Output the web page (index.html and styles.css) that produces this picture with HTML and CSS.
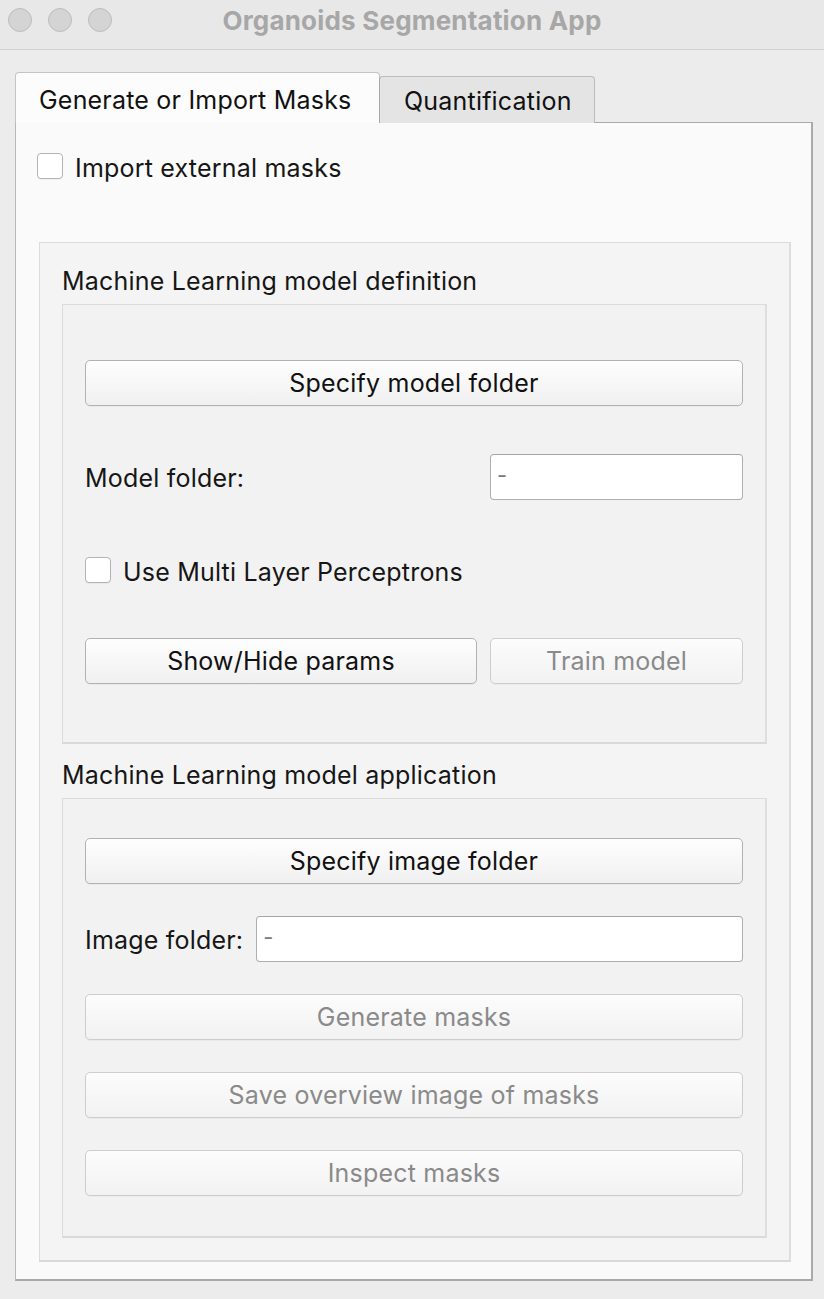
FILE: index.html
```html
<!DOCTYPE html>
<html>
<head>
<meta charset="utf-8">
<title>Organoids Segmentation App</title>
<link rel="stylesheet" href="styles.css">
</head>
<body>
<div class="titlebar">
  <div class="lights">
    <span class="light"></span><span class="light"></span><span class="light"></span>
  </div>
  <div class="title">Organoids Segmentation App</div>
  <div></div>
</div>
<div class="window">
  <div class="tabs">
    <div class="tab active">Generate or Import Masks</div>
    <div class="tab">Quantification</div>
  </div>
  <div class="pane">
    <div class="check top-check"><span class="box"></span><span class="check-text">Import external masks</span></div>
    <div class="group outer">
      <div class="group-title">Machine Learning model definition</div>
      <div class="group inner def">
        <div class="btn">Specify model folder</div>
        <div class="form-row model-row">
          <span class="label">Model folder:</span>
          <div class="input">-</div>
        </div>
        <div class="check mlp-check"><span class="box"></span><span class="check-text">Use Multi Layer Perceptrons</span></div>
        <div class="btn-row">
          <div class="btn">Show/Hide params</div>
          <div class="btn disabled">Train model</div>
        </div>
      </div>
      <div class="group-title second">Machine Learning model application</div>
      <div class="group inner app">
        <div class="btn">Specify image folder</div>
        <div class="form-row image-row">
          <span class="label">Image folder:</span>
          <div class="input grow">-</div>
        </div>
        <div class="btn disabled">Generate masks</div>
        <div class="btn disabled">Save overview image of masks</div>
        <div class="btn disabled">Inspect masks</div>
      </div>
    </div>
  </div>
</div>
</body>
</html>
```

FILE: styles.css
```css
* { box-sizing: border-box; }

html, body {
  margin: 0;
  padding: 0;
}

body {
  width: 824px;
  height: 1299px;
  overflow: hidden;
  background: #ececec;
  font-family: "Inter", "Liberation Sans", sans-serif;
  font-size: 25px;
  letter-spacing: 0.2px;
  color: #161616;
}

.titlebar {
  height: 50px;
  background: #e8e8e8;
  border-bottom: 1px solid #d2d2d2;
  display: grid;
  grid-template-columns: 1fr auto 1fr;
  align-items: center;
}

.lights {
  display: flex;
  gap: 16px;
  padding-left: 8px;
  align-self: start;
  padding-top: 8px;
}

.light {
  width: 24px;
  height: 24px;
  border-radius: 50%;
  background: #d4d4d4;
  border: 1px solid #bdbdbd;
}

.title {
  font-weight: 700;
  color: #a7a7a7;
  font-size: 26px;
  letter-spacing: 0.2px;
  margin-top: -8px;
}

.window {
  padding: 22px 11px 0 15px;
}

.tabs {
  display: flex;
  align-items: flex-end;
  position: relative;
  z-index: 1;
  margin-bottom: -1px;
}

.tab {
  height: 47px;
  padding: 2px 24px 0 24px;
  display: flex;
  align-items: center;
  background: #e4e4e4;
  border: 1px solid #bcbcbc;
  border-bottom: none;
  border-radius: 4px 4px 0 0;
  color: #111;
  width: 216px;
  margin-left: -1px;
}

.tab.active {
  height: 51px;
  width: 365px;
  margin-left: 0;
  background: #fcfcfc;
  border-color: #c4c4c4;
  padding-top: 8px;
  padding-bottom: 4px;
  padding-left: 23px;
}

.tab.active + .tab {
  border-left-color: #a8a8a8;
}

.pane {
  height: 1159px;
  background: #fafafa;
  border: 1px solid #b8b8b8;
  border-top-color: #aaaaaa;
  border-right: 2px solid #a9a9a9;
  border-bottom: 2px solid #a9a9a9;
  padding: 30px 20px 17px 23px;
}

.check {
  display: flex;
  align-items: center;
  gap: 12px;
}

.check-text {
  padding-top: 3px;
}

.box {
  width: 26px;
  height: 26px;
  background: #fff;
  border: 1px solid #b4b4b4;
  border-radius: 4px;
  box-shadow: 0 1px 0 rgba(0,0,0,0.04);
  flex: none;
}

.top-check {
  margin-left: -2px;
  height: 26px;
  margin-bottom: 63px;
}

.group {
  border: 1px solid #dcdcdc;
  border-bottom: 2px solid #d9d9d9;
  border-right: 2px solid #dedede;
}

.outer {
  height: 1020px;
  background: #f4f4f4;
  padding: 23px 22px 0 22px;
}

.group-title {
  height: 30px;
  line-height: 30px;
  margin-bottom: 8px;
  padding-left: 0;
}

.group-title.second {
  margin-top: 16px;
}

.inner {
  background: #f2f2f2;
  display: flex;
  flex-direction: column;
}

.def {
  height: 440px;
  padding: 55px 22px 0 22px;
}

.app {
  height: 440px;
  padding: 39px 22px 0 22px;
  gap: 32px;
}

.btn {
  height: 46px;
  display: flex;
  align-items: center;
  justify-content: center;
  border: 1px solid #b2b2b2;
  border-radius: 5px;
  background: linear-gradient(#fefefe, #f0f0f0);
  color: #111;
  box-shadow: 0 1px 0 rgba(0,0,0,0.03);
}

.btn.disabled {
  border-color: #cdcdcd;
  color: #8a8a8a;
  background: linear-gradient(#fcfcfc, #f2f2f2);
}

.form-row {
  display: flex;
  align-items: center;
}

.label {
  padding-top: 2px;
}

.model-row {
  margin-top: 48px;
  justify-content: space-between;
}

.image-row {
  gap: 13px;
}

.input {
  height: 46px;
  width: 253px;
  background: #fff;
  border: 1px solid #aeaeae;
  border-top-color: #a5a5a5;
  border-radius: 4px;
  color: #7a7a7a;
  padding-left: 6px;
  padding-bottom: 4px;
  display: flex;
  align-items: center;
  font-size: 22px;
}

.input.grow {
  flex: 1;
  width: auto;
}

.mlp-check {
  margin-top: 57px;
  height: 26px;
}

.btn-row {
  margin-top: 55px;
  display: grid;
  grid-template-columns: 1fr 253px;
  gap: 13px;
}
```
